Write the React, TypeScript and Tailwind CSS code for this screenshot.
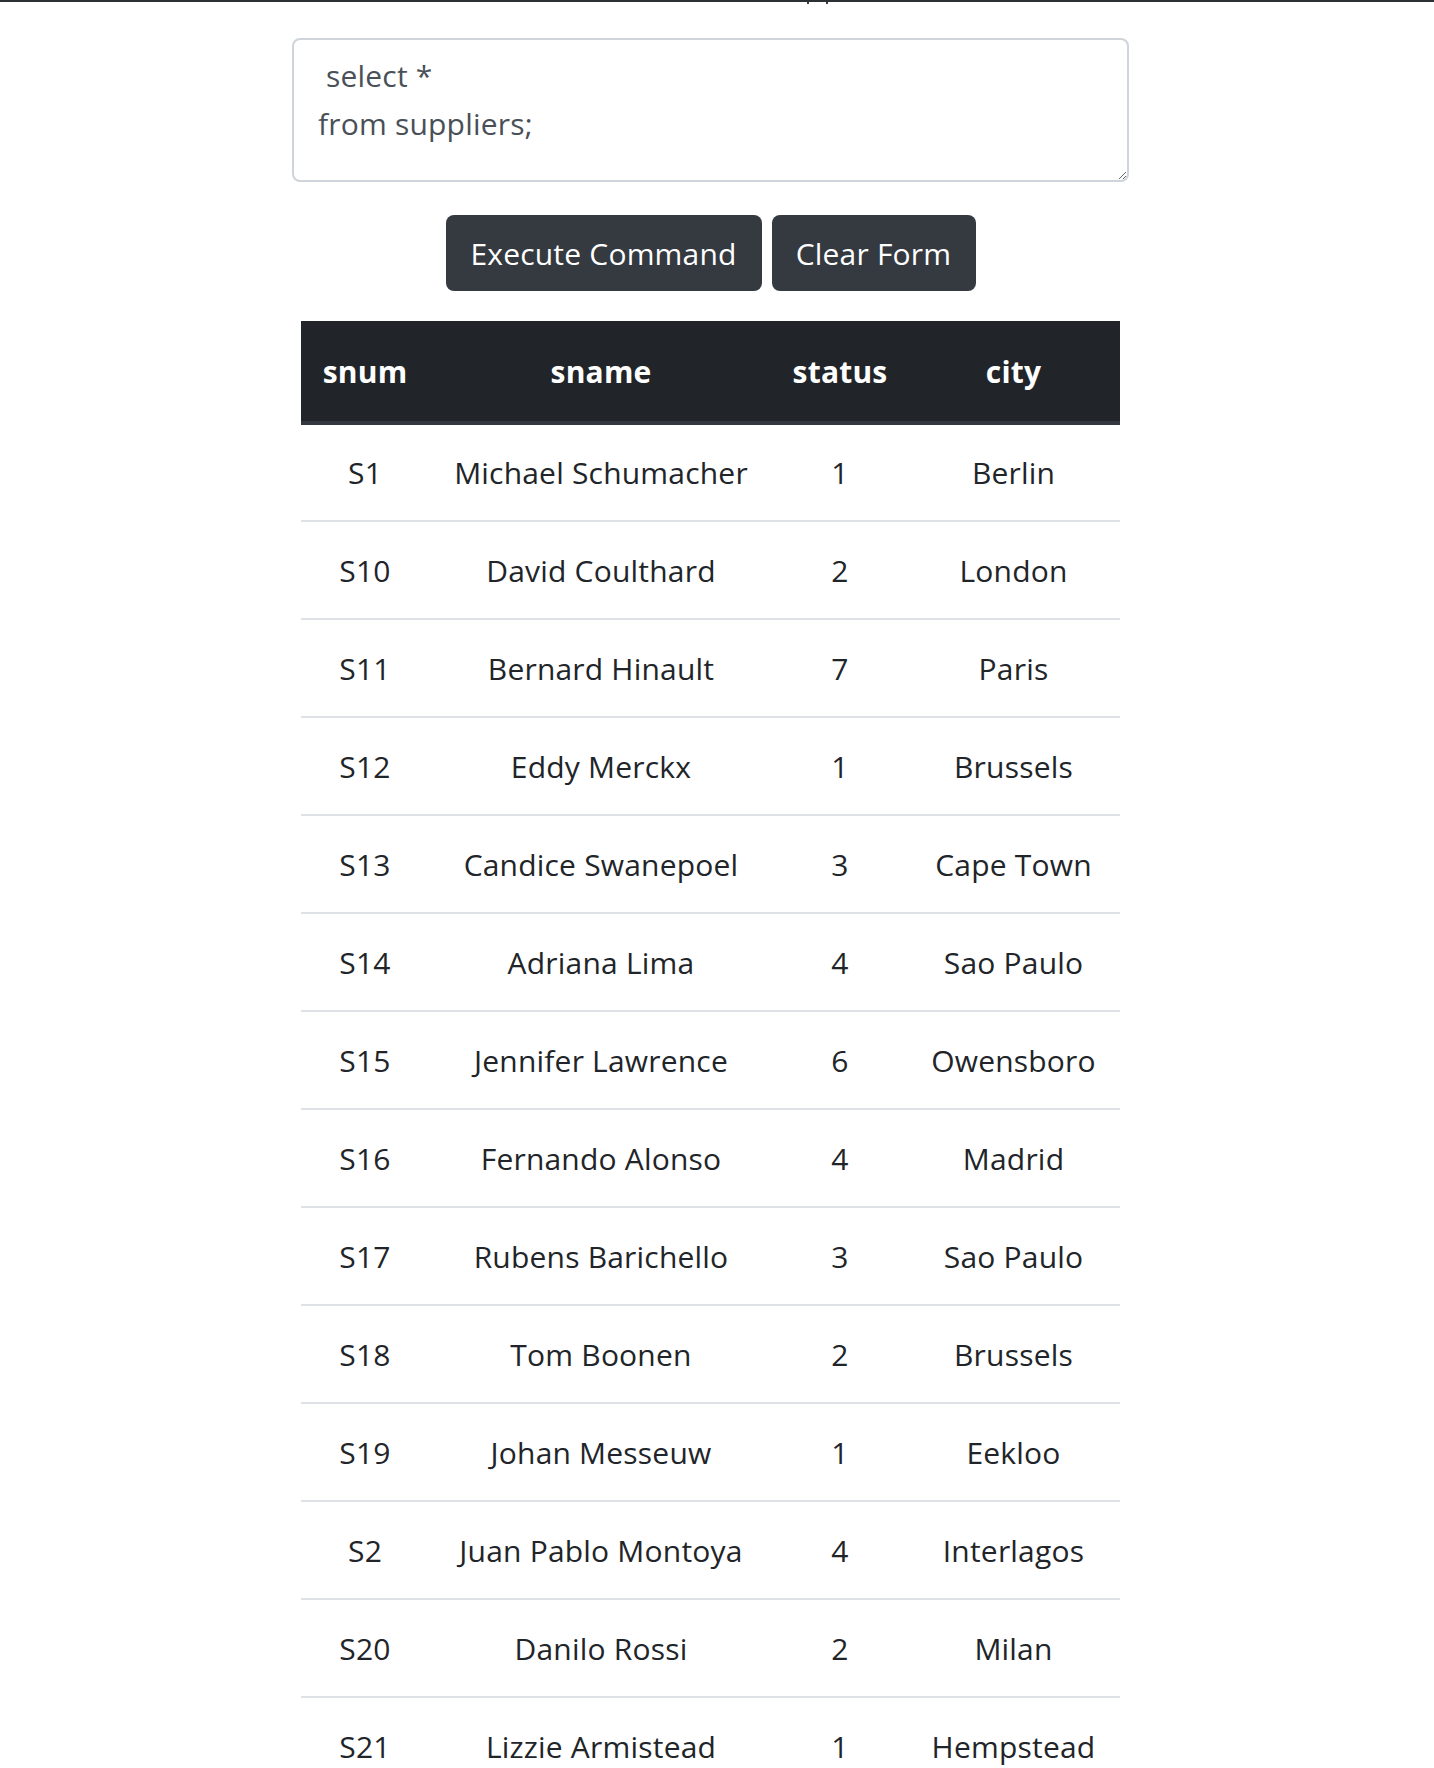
import { useState } from 'react';

const suppliers = [
  { snum: 'S1', sname: 'Michael Schumacher', status: 1, city: 'Berlin' },
  { snum: 'S10', sname: 'David Coulthard', status: 2, city: 'London' },
  { snum: 'S11', sname: 'Bernard Hinault', status: 7, city: 'Paris' },
  { snum: 'S12', sname: 'Eddy Merckx', status: 1, city: 'Brussels' },
  { snum: 'S13', sname: 'Candice Swanepoel', status: 3, city: 'Cape Town' },
  { snum: 'S14', sname: 'Adriana Lima', status: 4, city: 'Sao Paulo' },
  { snum: 'S15', sname: 'Jennifer Lawrence', status: 6, city: 'Owensboro' },
  { snum: 'S16', sname: 'Fernando Alonso', status: 4, city: 'Madrid' },
  { snum: 'S17', sname: 'Rubens Barichello', status: 3, city: 'Sao Paulo' },
  { snum: 'S18', sname: 'Tom Boonen', status: 2, city: 'Brussels' },
  { snum: 'S19', sname: 'Johan Messeuw', status: 1, city: 'Eekloo' },
  { snum: 'S2', sname: 'Juan Pablo Montoya', status: 4, city: 'Interlagos' },
  { snum: 'S20', sname: 'Danilo Rossi', status: 2, city: 'Milan' },
  { snum: 'S21', sname: 'Lizzie Armistead', status: 1, city: 'Hempstead' }
];

const App = () => {
  const [command, setCommand] = useState(' select *\nfrom suppliers;');

  return (
    <div className="min-h-screen bg-white text-[#212529] font-['Open_Sans',sans-serif]">
      {/* top bar, the heading above is cut off */}
      <div className="h-[2px] bg-[#2b3035] w-full" />
      <div className="flex h-[2px] w-[1421px]">
        <div className="ml-[807px] w-[2px] h-[2px] bg-[#4a3a3a]" />
        <div className="ml-[17px] w-[2px] h-[2px] bg-[#3a3a4a]" />
      </div>

      <div className="w-[1421px] flex flex-col items-center pt-[34px]">
        <textarea
          value={command}
          onChange={(e) => setCommand(e.target.value)}
          className="w-[837px] h-[144px] border-2 border-[#ced4da] rounded-lg px-6 py-3 text-[30px] leading-[48px] text-[#495057] tracking-[0.2px] outline-none"
        />

        <div className="flex gap-[10px] mt-[33px]">
          <button className="bg-[#343a40] text-white rounded-lg px-6 h-[76px] text-[30px] tracking-[0.2px] w-[316px]">
            Execute Command
          </button>
          <button className="bg-[#343a40] text-white rounded-lg px-6 h-[76px] text-[30px] tracking-[0.2px] w-[204px]">
            Clear Form
          </button>
        </div>

        <table className="w-[819px] mt-[30px] border-collapse table-fixed text-[30px] tracking-[0.2px]">
          <thead>
            <tr className="bg-[#212529] text-white h-[102px] border-b-4 border-[#32383e]">
              <th className="w-[128px] font-bold">snum</th>
              <th className="w-[344px] font-bold">sname</th>
              <th className="w-[134px] font-bold">status</th>
              <th className="w-[213px] font-bold">city</th>
            </tr>
          </thead>
          <tbody>
            {suppliers.map((s) => (
              <tr key={s.snum} className="h-[98px] border-b-2 border-[#dee2e6] text-center">
                <td>{s.snum}</td>
                <td>{s.sname}</td>
                <td>{s.status}</td>
                <td>{s.city}</td>
              </tr>
            ))}
          </tbody>
        </table>
      </div>
    </div>
  );
};

export default App;
